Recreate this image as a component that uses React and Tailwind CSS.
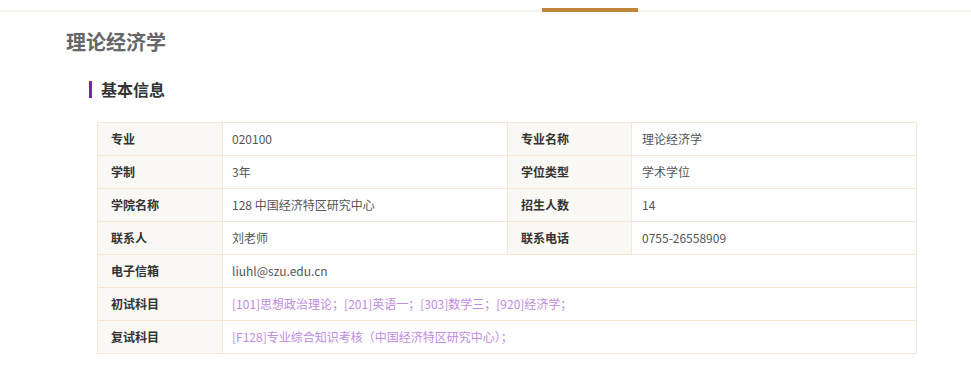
import React from "react";

const rows = [
  [["专业", "020100"], ["专业名称", "理论经济学"]],
  [["学制", "3年"], ["学位类型", "学术学位"]],
  [["学院名称", "128 中国经济特区研究中心"], ["招生人数", "14"]],
  [["联系人", "刘老师"], ["联系电话", "0755-26558909"]],
];

const wide = [
  ["电子信箱", "liuhl@szu.edu.cn", false],
  ["初试科目", "[101]思想政治理论；[201]英语一；[303]数学三；[920]经济学；", true],
  ["复试科目", "[F128]专业综合知识考核（中国经济特区研究中心）；", true],
];

const lab = "h-[33px] border border-[#f5e6d6] bg-[#faf8f5] pl-[13px] text-left font-bold text-[#333] align-middle";
const val = "h-[33px] border border-[#f5e6d6] bg-white pl-[9px] text-left text-[#555] align-middle";

export default function App() {
  return (
    <div className="w-[971px] h-[385px] bg-white" style={{ fontFamily: '"Noto Sans CJK SC", "Noto Sans", sans-serif' }}>
      <div className="relative h-[12px] border-b-2 border-[#f7f2ee]">
        <div className="absolute left-[542px] top-[8px] h-[4px] w-[96px] bg-[#c0853a]" />
      </div>
      <h1 className="ml-[66px] mt-[17px] text-[20px] leading-[26px] font-bold text-[#666]">理论经济学</h1>
      <div className="ml-[89px] mt-[23px] flex items-center">
        <div className="h-[17px] w-[3px] bg-[#7d22a5]" />
        <div className="ml-[9px] text-[16px] leading-[22px] font-bold text-[#333]">基本信息</div>
      </div>
      <table className="ml-[97px] mt-[22px] border-collapse text-[12px] leading-[16px] table-fixed w-[819px]">
        <colgroup>
          <col className="w-[125px]" />
          <col className="w-[285px]" />
          <col className="w-[124px]" />
          <col className="w-[285px]" />
        </colgroup>
        <tbody>
          {rows.map((r, i) => (
            <tr key={i}>
              <td className={lab}>{r[0][0]}</td>
              <td className={val}>{r[0][1]}</td>
              <td className={lab}>{r[1][0]}</td>
              <td className={val + " pl-[10px]"}>{r[1][1]}</td>
            </tr>
          ))}
          {wide.map((w, i) => (
            <tr key={"w" + i}>
              <td className={lab}>{w[0]}</td>
              <td colSpan={3} className={val + (w[2] ? " !text-[#c08be0]" : "")}>{w[1]}</td>
            </tr>
          ))}
        </tbody>
      </table>
    </div>
  );
}
